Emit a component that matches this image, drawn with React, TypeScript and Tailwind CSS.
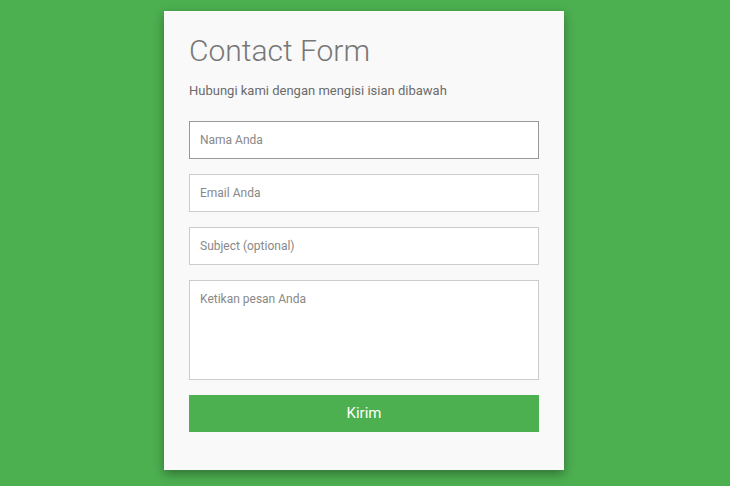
import React from "react";

export default function App() {
  const inputCls =
    "block w-full h-[38px] bg-white border border-[#cccccc] px-[10px] text-[12px] text-[#555] placeholder:text-[#888] outline-none";
  return (
    <div
      className="w-[730px] h-[486px] bg-[#4caf50] pl-[164px] pt-[11px] overflow-hidden"
      style={{ fontFamily: "Roboto, 'Liberation Sans', sans-serif" }}
    >
      <div className="w-[400px] h-[459px] bg-[#f9f9f9] shadow-[0_4px_10px_rgba(0,0,0,0.35)] px-[25px] pt-[20px]">
        <h1 className="text-[30px] leading-[40px] font-light text-[#777777]">Contact Form</h1>
        <p className="mt-[12px] text-[13px] leading-[16px] text-[#6b6b6b]">
          Hubungi kami dengan mengisi isian dibawah
        </p>
        <form className="mt-[22px] flex flex-col gap-[15px]">
          <input className={inputCls + " !border-[#999999]"} placeholder="Nama Anda" />
          <input className={inputCls} placeholder="Email Anda" />
          <input className={inputCls} placeholder="Subject (optional)" />
          <textarea
            className="block w-full h-[100px] bg-white border border-[#cccccc] px-[10px] pt-[9px] text-[12px] text-[#555] placeholder:text-[#888] outline-none resize-none"
            placeholder="Ketikan pesan Anda"
          />
          <button
            type="button"
            className="w-full h-[37px] bg-[#4caf50] text-white text-[15px] font-normal"
          >
            Kirim
          </button>
        </form>
      </div>
    </div>
  );
}
